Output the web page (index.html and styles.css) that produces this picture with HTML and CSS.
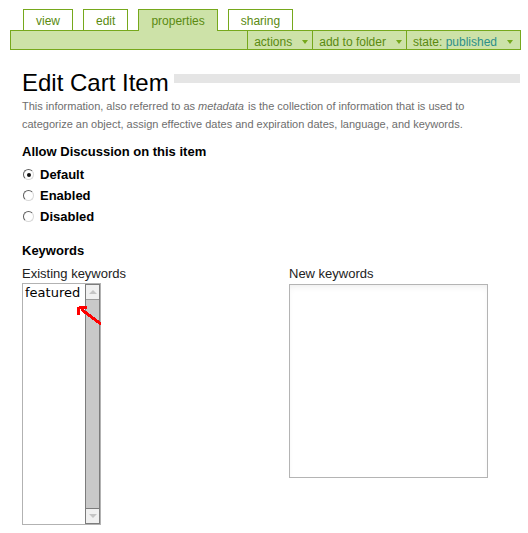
FILE: index.html
```html
<!DOCTYPE html>
<html lang="en">
<head>
    <meta charset="UTF-8">
    <title>Edit Cart Item</title>
    <link rel="stylesheet" href="styles.css">
</head>
<body>
    <div class="views">
        <ul class="tabs">
            <li class="tab">view</li>
            <li class="tab">edit</li>
            <li class="tab selected">properties</li>
            <li class="tab">sharing</li>
        </ul>
        <div class="actions-bar">
            <span class="menu">actions</span>
            <span class="menu">add to folder</span>
            <span class="menu">state: <span class="state">published</span></span>
        </div>
    </div>

    <div class="content">
        <h1 class="title"><span>Edit Cart Item</span><span class="title-rule"></span></h1>
        <p class="description">This information, also referred to as <em>metadata</em> is the collection of information that is used to<br>categorize an object, assign effective dates and expiration dates, language, and keywords.</p>

        <div class="field">
            <div class="field-label">Allow Discussion on this item</div>
            <div class="radio-row"><span class="radio checked"></span>Default</div>
            <div class="radio-row"><span class="radio"></span>Enabled</div>
            <div class="radio-row"><span class="radio"></span>Disabled</div>
        </div>

        <div class="field keywords">
            <div class="field-label">Keywords</div>
            <div class="keyword-columns">
                <div class="keyword-col">
                    <div class="sub-label">Existing keywords</div>
                    <div class="listbox">
                        <div class="list-items">featured</div>
                        <div class="scrollbar">
                            <div class="scroll-btn up"></div>
                            <div class="scroll-track"></div>
                            <div class="scroll-btn down"></div>
                        </div>
                        <!-- red pointer drawn over the list -->
                        <svg class="pointer" width="30" height="22" viewBox="0 0 30 22" shape-rendering="crispEdges">
                            <path d="M3 2.5 H11 M2.5 2 V10 M5 4 L25 19" stroke="#f00" stroke-width="3" fill="none"/>
                        </svg>
                    </div>
                </div>
                <div class="keyword-col">
                    <div class="sub-label">New keywords</div>
                    <div class="textarea"></div>
                </div>
            </div>
        </div>
    </div>
</body>
</html>
```

FILE: styles.css
```css
/* base */
body {
    margin: 0;
    font-family: "Liberation Sans", Arial, sans-serif;
    color: #000;
    background: #fff;
}

/* tabs + green bar */
.views {
    margin: 9px 0 0 10px;
    width: 511px;
}
.tabs {
    list-style: none;
    margin: 0;
    padding: 0 0 0 13px;
    display: flex;
    gap: 10px;
}
.tab {
    height: 16px;
    padding: 4px 12px 0;
    line-height: 14px;
    font-size: 12px;
    color: #5a8a10;
    border: 1px solid #76a81c;
    border-bottom: none;
    background: #fff;
    position: relative;
}
.tab.selected {
    background: #cde2a8;
    margin-bottom: -1px;
    height: 17px;
    z-index: 1;
}
.actions-bar {
    display: flex;
    justify-content: flex-end;
    height: 18px;
    background: #cde2a8;
    border: 1px solid #76a81c;
}
.menu {
    font-size: 12px;
    line-height: 14px;
    padding: 4px 4px 0 6px;
    color: #5a8a10;
    border-left: 1px solid #76a81c;
}
.menu::after {
    content: "";
    display: inline-block;
    margin-left: 10px;
    vertical-align: 2px;
    border-left: 3.5px solid transparent;
    border-right: 3.5px solid transparent;
    border-top: 4px solid #76a81c;
}
.menu:last-child {
    padding-right: 7px;
}
.state {
    color: #2e8f8b;
}

/* content */
.content {
    padding: 0 0 0 22px;
}
.title {
    display: flex;
    margin: 19px 8px 0 0;
    font-size: 24px;
    line-height: 28px;
    font-weight: normal;
}
.title-rule {
    flex: 1;
    height: 9px;
    margin: 5px 0 0 5px;
    background: #e5e5e5;
}
.description {
    margin: 0;
    font-size: 11px;
    line-height: 18px;
    color: #6e6e6e;
}
.description em {
    padding-right: 1px;
}

.field {
    margin-top: 10px;
}
.field-label {
    font-size: 13px;
    font-weight: bold;
    line-height: 18px;
}
.radio-row {
    display: flex;
    align-items: center;
    height: 21px;
    font-size: 13px;
    font-weight: bold;
}
.field-label + .radio-row {
    margin-top: 3px;
}
.radio {
    box-sizing: border-box;
    width: 11px;
    height: 11px;
    margin: 0 6px 0 1px;
    border-radius: 50%;
    border: 1px solid;
    border-color: #5e5e5e #d8d8d8 #d8d8d8 #5e5e5e;
    position: relative;
}
.radio.checked::after {
    content: "";
    position: absolute;
    left: 2.5px;
    top: 2.5px;
    width: 4px;
    height: 4px;
    border-radius: 50%;
    background: #111;
}

.keywords {
    margin-top: 15px;
}
.keyword-columns {
    display: flex;
    margin-top: 5px;
}
.keyword-col:first-child {
    width: 267px;
}
.sub-label {
    font-size: 13px;
    line-height: 18px;
    color: #222;
}
.listbox {
    position: relative;
    display: flex;
    width: 77px;
    height: 240px;
    border: 1px solid #b2b2b2;
}
.list-items {
    flex: 1;
    padding: 1px 0 0 2px;
    font-family: "DejaVu Sans", sans-serif;
    font-size: 13px;
    line-height: 16px;
}
.scrollbar {
    display: flex;
    flex-direction: column;
    width: 13px;
    border: 1px solid #7c7c7c;
    background: #c9c9c9;
}
.scroll-btn {
    height: 14px;
    background: #f0f0f0;
    display: flex;
    align-items: center;
    justify-content: center;
}
.scroll-btn.up {
    border-bottom: 1px solid #9a9a9a;
}
.scroll-btn.down {
    border-top: 1px solid #7c7c7c;
}
.scroll-btn::after {
    content: "";
    border-left: 4px solid transparent;
    border-right: 4px solid transparent;
}
.scroll-btn.up::after {
    border-bottom: 4px solid #c4c4c4;
}
.scroll-btn.down::after {
    border-top: 4px solid #c4c4c4;
}
.scroll-track {
    flex: 1;
}
.pointer {
    position: absolute;
    left: 53px;
    top: 21px;
}
.textarea {
    width: 197px;
    height: 192px;
    margin-top: 1px;
    border: 1px solid #b4b4b4;
    box-shadow: inset 0 4px 6px -2px rgba(0,0,0,0.07);
}
```
